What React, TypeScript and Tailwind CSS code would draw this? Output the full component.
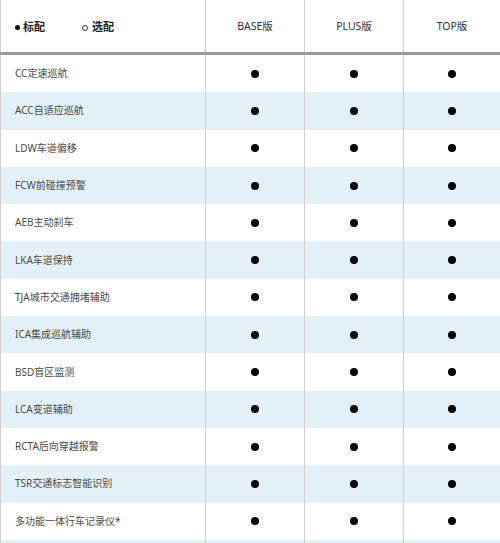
import React from "react";

const rows = [
  "CC定速巡航",
  "ACC自适应巡航",
  "LDW车道偏移",
  "FCW前碰撞预警",
  "AEB主动刹车",
  "LKA车道保持",
  "TJA城市交通拥堵辅助",
  "ICA集成巡航辅助",
  "BSD盲区监测",
  "LCA变道辅助",
  "RCTA后向穿越报警",
  "TSR交通标志智能识别",
  "多功能一体行车记录仪*",
];

function Dot() {
  return <span className="block w-[8px] h-[8px] rounded-full bg-black" />;
}

export default function App() {
  return (
    <div
      className="w-[500px] h-[543px] overflow-hidden bg-white text-[#333]"
      style={{ fontFamily: '"Noto Sans", "Noto Sans CJK SC", sans-serif' }}
    >
      <div className="flex h-[52px] border-l border-[#d0d0d0]">
        <div className="w-[204px] flex items-center pl-[14px] pt-[3px] text-[11px] font-bold text-[#222]">
          <span className="flex items-center gap-[3px]">
            <span className="block w-[5px] h-[5px] rounded-full bg-black" />
            标配
          </span>
          <span className="flex items-center gap-[4px] ml-[37px]">
            <span className="block w-[6px] h-[6px] rounded-full border border-[#333]" />
            选配
          </span>
        </div>
        <div className="w-[99px] border-l border-[#cfcfcf] flex items-center justify-center pt-[2px] text-[10.5px] text-[#333]">BASE版</div>
        <div className="w-[99px] border-l border-[#cfcfcf] flex items-center justify-center pt-[2px] text-[10.5px] text-[#333]">PLUS版</div>
        <div className="flex-1 border-l border-[#cfcfcf] flex items-center justify-center pt-[2px] text-[10.5px] text-[#333]">TOP版</div>
      </div>
      <div className="h-[3px] bg-[#9a9a9a]" />
      {rows.map((r, i) => (
        <div
          key={r}
          className={`flex h-[37.3px] border-l border-[#d0d0d0] ${i % 2 === 1 ? "bg-[#e3f1f6]" : "bg-white"}`}
        >
          <div className="w-[204px] flex items-center pl-[14px] text-[10px] text-[#4a4a4a]">{r}</div>
          <div className="w-[99px] border-l border-[#cfcfcf] flex items-center justify-center"><Dot /></div>
          <div className="w-[99px] border-l border-[#cfcfcf] flex items-center justify-center"><Dot /></div>
          <div className="flex-1 border-l border-[#cfcfcf] flex items-center justify-center"><Dot /></div>
        </div>
      ))}
      <div className="flex h-[37px] border-l border-[#d0d0d0] bg-[#e3f1f6]">
        <div className="w-[204px]" />
        <div className="w-[99px] border-l border-[#cfcfcf]" />
        <div className="w-[99px] border-l border-[#cfcfcf]" />
        <div className="flex-1 border-l border-[#cfcfcf]" />
      </div>
    </div>
  );
}
